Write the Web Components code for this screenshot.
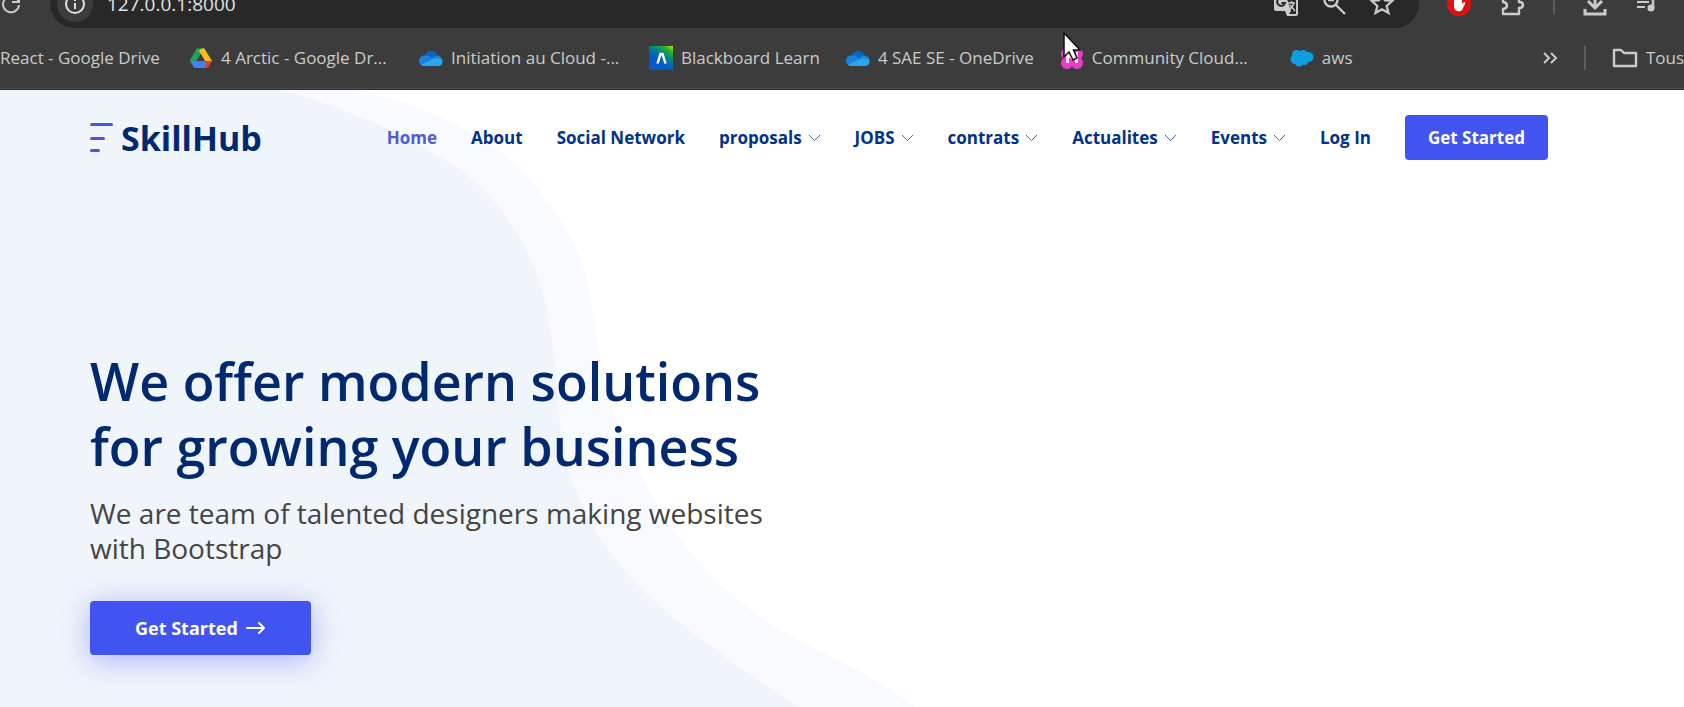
<!DOCTYPE html>
<html lang="en">
<head>
<meta charset="utf-8">
<title>SkillHub</title>
<style>
body { margin: 0; min-height: 100vh; display: flex; flex-direction: column; overflow: hidden; background: #fff; font-family: "Open Sans", "Noto Sans", sans-serif; }
</style>
</head>
<body>
<browser-bar></browser-bar>
<skill-site>
  <site-header slot="header">
    <nav-link current>Home</nav-link>
    <nav-link>About</nav-link>
    <nav-link>Social Network</nav-link>
    <nav-link menu>proposals</nav-link>
    <nav-link menu>JOBS</nav-link>
    <nav-link menu>contrats</nav-link>
    <nav-link menu>Actualites</nav-link>
    <nav-link menu>Events</nav-link>
    <nav-link>Log In</nav-link>
  </site-header>
  <hero-block>
    <span slot="title">We offer modern solutions for growing your business</span>
    <span slot="lead">We are team of talented designers making websites with Bootstrap</span>
    <span slot="action">Get Started</span>
  </hero-block>
</skill-site>

<script>
function define(name, html) {
  const t = document.createElement('template');
  t.innerHTML = html;
  customElements.define(name, class extends HTMLElement {
    constructor() {
      super();
      this.attachShadow({ mode: 'open' }).append(t.content.cloneNode(true));
    }
  });
}

const cloud = `<svg slot="icon" width="24" height="24" viewBox="0 0 24 24"><path d="M6 9.500A6.500 6.500 0 0 1 18.500 9.500L21 12 8 16 3 13Z" fill="#0a63bd"/><path d="M0 14.500A5 5 0 0 1 6 9.500Q9 8.500 11.500 11L18 15 4 19.500Q0 19 0 14.500Z" fill="#1683dc"/><path d="M13 12.500Q15 9 18.500 9.500A5.200 5.200 0 0 1 23.500 15Z" fill="#1683dc"/><path d="M2 18.500 13.500 13.300Q19 10.500 23 13.500 25 18.500 20 20H5Q3 20 2 18.500Z" fill="#2aa5ee"/></svg>`;

define('book-mark', `
<style>
:host { display: block; flex: none; position: relative; }
:host([long]) { width: 204px; }
a { display: flex; align-items: center; gap: 8px; color: #cbcbcb; text-decoration: none; font-size: 17px; line-height: 24px; white-space: nowrap; }
</style>
<a href="#"><slot name="icon"></slot><span><slot></slot></span></a>
<slot name="over"></slot>`);

define('browser-bar', `
<style>
:host { display: block; flex: none; background: #3c3c3c; color: #cbcbcb; border-bottom: 1px solid #303030; }
svg { display: block; flex: none; }
button { all: unset; display: block; flex: none; }
.tools { display: flex; align-items: flex-end; gap: 28px; height: 28px; padding-right: 25px; overflow: hidden; }
.tools > :not(.rule) { height: 48px; display: flex; align-items: center; }
.tools > .rule { align-self: flex-start; height: 14px; }
.pill { flex: 1; min-width: 0; gap: 22px; padding: 0 24px 0 7px; box-sizing: border-box; background: #282828; border-radius: 24px; }
.info { width: 36px; height: 36px; border-radius: 50%; background: #3c3c3c; display: grid; place-items: center; }
input { all: unset; flex: 1; min-width: 0; margin-left: -8px; color: #e3e3e3; font-size: 19px; line-height: 24px; }
.rule { width: 2px; height: 24px; background: #5c5c5c; flex: none; }
.marks { display: flex; align-items: center; gap: 26px; height: 60px; overflow: hidden; border-bottom: 1px solid #4a4a4a; }
.first { width: 163px; }
.end { margin-left: auto; display: flex; align-items: center; gap: 26px; }
.cursor { position: absolute; left: 3px; top: -14px; }
</style>
<div class="tools">
  <button aria-label="Reload"><svg width="22" height="24" viewBox="0 0 22 24" fill="none" stroke="#cbcbcb" stroke-width="2"><path d="M19 13A8 8 0 1 1 16 6L19 9M19 3V10H12"/></svg></button>
  <div class="pill">
    <button class="info" aria-label="Site information"><svg width="22" height="22" viewBox="0 0 22 22" fill="none" stroke="#e0e0e0" stroke-width="2"><circle cx="11" cy="11" r="9"/><path d="M11 10V16M11 6V8"/></svg></button>
    <input aria-label="Address" value="127.0.0.1:8000">
    <button aria-label="Translate"><svg width="26" height="26" viewBox="0 0 26 26"><path d="M3 1H12L14 6H23Q25 6 25 8V23Q25 25 23 25H14L12 20H3Q1 20 1 18V3Q1 1 3 1Z" fill="#cbcbcb"/><path d="M14.500 8H23V23H16L18 20 14 8Z" fill="#282828"/><path d="M15 12H22M18.500 10V12M21 12Q20 16 16 19M17 14 22 20" stroke="#cbcbcb" stroke-width="1.500" fill="none"/><path d="M11 8A4 4 0 1 0 12 12H8.500" stroke="#282828" stroke-width="2" fill="none"/></svg></button>
    <button aria-label="Zoom"><svg width="26" height="26" viewBox="0 0 26 26" fill="none" stroke="#cbcbcb" stroke-width="2.400"><circle cx="10" cy="9" r="6.500"/><path d="M15 14 24 23M7 9H13"/></svg></button>
    <button aria-label="Bookmark"><svg width="26" height="26" viewBox="0 0 26 26" fill="none" stroke="#cbcbcb" stroke-width="2.200"><path d="M13 2 15.900 9.300 23 10 17.600 15 19.500 22 13 18.200 6.500 22 8.400 15 3 10 10.100 9.300Z"/></svg></button>
  </div>
  <button aria-label="Ad blocker"><svg width="24" height="24" viewBox="0 0 24 24"><circle cx="12" cy="12" r="12" fill="#e0120e"/><path d="M7 11V6Q8 5 9 6V10 4Q10 3 11 4V10 3Q12 2 13 3V10 4Q14 3 15 4V12L17 10Q19 10 18 12L15 18Q13 20 10 19 7 18 7 14Z" fill="#fff"/></svg></button>
  <button aria-label="Extensions"><svg width="26" height="24" viewBox="0 0 24 24" fill="none" stroke="#cbcbcb" stroke-width="2.400"><path d="M3 5H8Q8 1 10.500 1T13 5H19V10Q23 10 23 13T19 16V22H3V17Q7 16.500 7 13.500T3 10Z" stroke-linejoin="round"/></svg></button>
  <i class="rule"></i>
  <button aria-label="Downloads"><svg width="24" height="24" viewBox="0 0 24 24" fill="none" stroke="#cbcbcb" stroke-width="3"><path d="M12 0V15M5 9 12 16 19 9M2 17V22H22V17"/></svg></button>
  <button aria-label="Media"><svg width="24" height="24" viewBox="0 0 24 24"><path d="M2 5H14M2 10H14M2 15H10" stroke="#cbcbcb" stroke-width="2"/><path d="M17 5H23M18 5V16" stroke="#cbcbcb" stroke-width="2.500"/><circle cx="16" cy="16" r="3.500" fill="#cbcbcb"/></svg></button>
</div>
<div class="marks">
  <book-mark class="first">React - Google Drive</book-mark>
  <book-mark long><svg slot="icon" width="24" height="24" viewBox="0 0 24 24"><path d="M8 2H15L8.500 13 5 20 1 14Z" fill="#1da261"/><path d="M8 2H15L11.500 8Z" fill="#0d8a3c"/><path d="M15 2 23 15H16L9.500 4Z" fill="#fcbc19"/><path d="M4.500 15H19L16.500 22H6Q5 22 4.500 21L1 15Z" fill="#3f83ee"/><path d="M16 15H23L19.500 21Q19 22 17.500 22Z" fill="#e3402e"/><path d="M12 8.500 15.700 15H8.300Z" fill="#3c3c3c"/></svg>4 Arctic - Google Dr...</book-mark>
  <book-mark long>${cloud}Initiation au Cloud -...</book-mark>
  <book-mark><svg slot="icon" width="24" height="24" viewBox="0 0 24 24"><defs><linearGradient id="bb" x1="1" y1="0" x2=".3" y2="1"><stop offset="0" stop-color="#c8e600"/><stop offset=".2" stop-color="#22b02c"/><stop offset=".45" stop-color="#04808c"/><stop offset=".7" stop-color="#0558c8"/></linearGradient></defs><rect width="24" height="24" fill="url(#bb)"/><path d="M8.500 17.500 11.500 8H13.500L16.500 17.500" fill="none" stroke="#fff" stroke-width="2.400"/></svg>Blackboard Learn</book-mark>
  <book-mark>${cloud}4 SAE SE - OneDrive</book-mark>
  <book-mark long><svg slot="icon" width="24" height="24" viewBox="0 0 24 24" ><g fill="#e83ec6"><circle cx="7" cy="8" r="6"/><circle cx="17" cy="8" r="6"/><circle cx="7" cy="17" r="6"/><circle cx="17" cy="17" r="6"/></g><path d="M7.500 17V8L12 12 16.500 8V17" fill="none" stroke="#fff" stroke-width="2.500"/></svg>Community Cloud...<svg slot="over" class="cursor" width="20" height="30" viewBox="0 0 20 30"><path d="M1 1V25L6 20 10 28 14 26 10.500 18H17Z" fill="#fff" stroke="#111" stroke-width="1.500"/></svg></book-mark>
  <book-mark><svg slot="icon" width="24" height="24" viewBox="0 0 24 24" fill="#0f9fe0"><circle cx="6.500" cy="8.500" r="4.500"/><circle cx="13" cy="8.500" r="4.500"/><circle cx="18.500" cy="11" r="5"/><circle cx="5" cy="13.500" r="4.500"/><circle cx="9" cy="16" r="4.500"/><circle cx="14" cy="14.500" r="4.500"/></svg>aws</book-mark>
  <div class="end">
    <button aria-label="More bookmarks"><svg width="16" height="16" viewBox="0 0 16 16" fill="none" stroke="#cbcbcb" stroke-width="2"><path d="M2 3 7 8 2 13M9 3 14 8 9 13"/></svg></button>
    <i class="rule"></i>
    <book-mark><svg slot="icon" width="26" height="24" viewBox="0 0 26 24" fill="none" stroke="#cbcbcb" stroke-width="2.400"><path d="M2 4H9L12 7H24V20H2Z" stroke-linejoin="round"/></svg>Tous</book-mark>
  </div>
</div>`);

define('nav-link', `
<style>
:host { display: block; flex: none; }
a { display: flex; align-items: center; gap: 6px; color: #013289; text-decoration: none; font-size: 17px; font-weight: 700; line-height: 24px; white-space: nowrap; }
:host([current]) a { color: #4f5bd9; }
svg { display: none; }
:host([menu]) svg { display: block; }
</style>
<a href="#"><slot></slot><svg width="13" height="12" viewBox="0 0 13 12" fill="none" stroke="#4a6aa8"><path d="M1 3 6.500 8.500 12 3"/></svg></a>`);

define('site-header', `
<style>
:host { display: flex; align-items: center; justify-content: space-between; padding: 25px 0; }
.logo { display: flex; align-items: center; gap: 7px; color: #012970; text-decoration: none; font-size: 34px; font-weight: 700; line-height: 40px; }
nav { display: flex; align-items: center; gap: 34px; }
button { all: unset; height: 45px; padding: 0 23px; background: #4154f1; border-radius: 4px; color: #fff; font-size: 17px; font-weight: 700; line-height: 44px; white-space: nowrap; }
</style>
<a class="logo" href="#"><svg width="24" height="32" viewBox="0 0 24 32" fill="#4b55dc"><rect y="1" width="23" height="3" rx="1.500"/><rect y="15" width="15" height="3" rx="1.500"/><rect y="27" width="10" height="3" rx="1.500"/></svg>SkillHub</a>
<nav><slot></slot><button>Get Started</button></nav>`);

define('hero-block', `
<style>
:host { display: grid; grid-template-columns: 1fr 1fr; padding-top: 163px; }
h1 { margin: 0; color: #012970; font-size: 52px; font-weight: 600; line-height: 65px; }
p { margin: 18px 0 35px; color: #444; font-size: 28px; line-height: 35px; }
button { all: unset; box-sizing: border-box; display: inline-flex; align-items: center; gap: 8px; height: 54px; padding: 0 45px; background: #4154f1; border-radius: 4px; color: #fff; font-size: 18px; font-weight: 700; box-shadow: 0 5px 30px rgba(65, 84, 241, .4); }
</style>
<div>
  <h1><slot name="title"></slot></h1>
  <p><slot name="lead"></slot></p>
  <button><slot name="action"></slot><svg width="20" height="16" viewBox="0 0 20 16" fill="none" stroke="#fff" stroke-width="2" stroke-linecap="round" stroke-linejoin="round"><path d="M1 8H18M13 3 18 8 13 13"/></svg></button>
</div>`);

define('skill-site', `
<style>
:host { display: block; flex: 1; position: relative; isolation: isolate; padding: 0 136px 0 90px; }
.waves { position: absolute; inset: 0; width: 100%; height: 100%; z-index: -1; }
</style>
<svg class="waves" viewBox="0 0 1684 617" preserveAspectRatio="xMinYMin slice">
  <path d="M0 0H354C395 8 430 20 462 38C498 57 520 76 537 98C565 132 582 165 588 195C598 250 600 300 634 370C650 405 665 433 690 462C720 498 750 522 784 542C830 568 875 585 915 617H0Z" fill="#f9faff"/>
  <path d="M0 0H281C350 18 430 55 473 90C515 126 540 180 548 225C560 290 553 350 580 410C598 450 620 478 650 507C695 549 745 580 797 617H0Z" fill="#f0f4fb"/>
</svg>
<slot name="header"></slot>
<slot></slot>`);
</script>
</body>
</html>
